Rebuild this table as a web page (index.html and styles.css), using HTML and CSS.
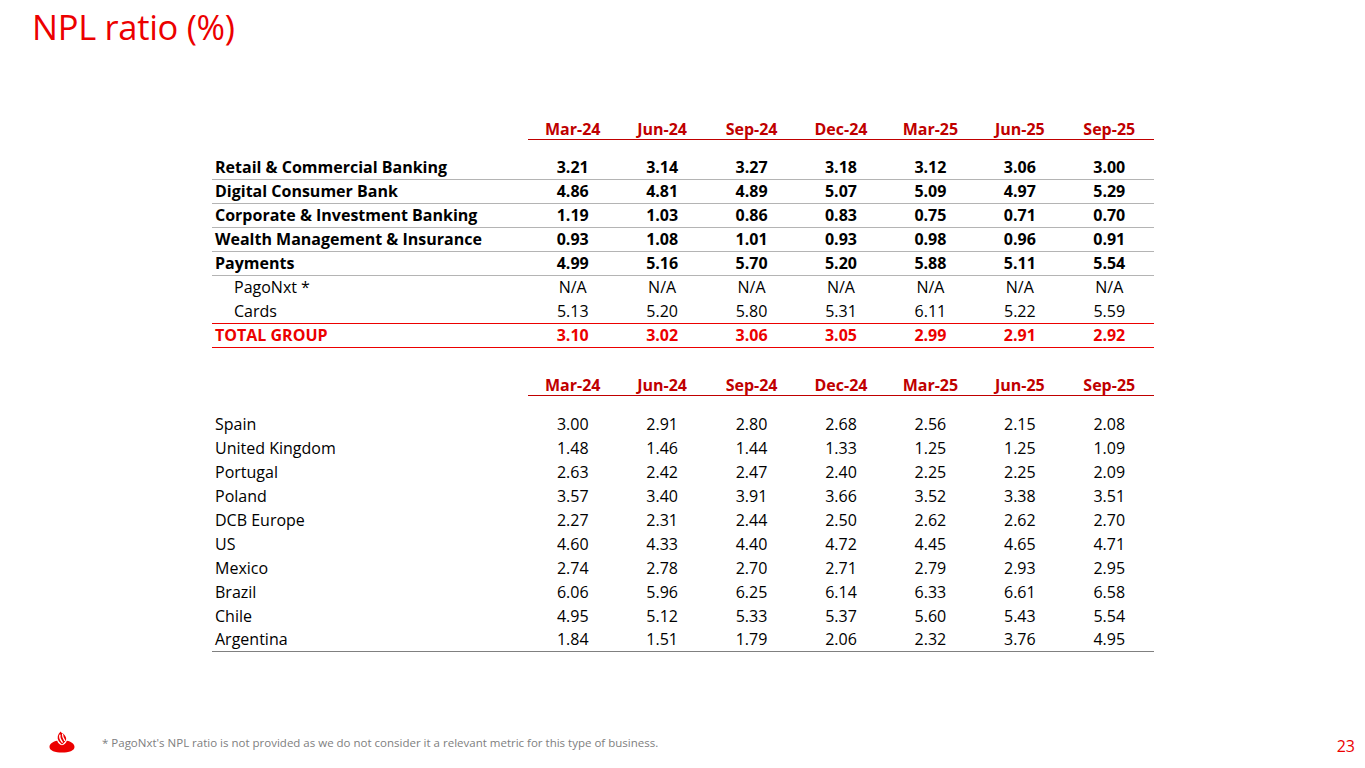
FILE: index.html
```html
<!DOCTYPE html>
<html>
<head>
<meta charset="utf-8">
<link rel="stylesheet" href="styles.css">
</head>
<body>
<div class="slide">
  <h1 class="title">NPL ratio (%)</h1>
  <div class="tables">
    <table class="npl">
      <colgroup><col class="c-label"><col><col><col><col><col><col><col></colgroup>
      <thead>
        <tr class="head"><th></th><th>Mar-24</th><th>Jun-24</th><th>Sep-24</th><th>Dec-24</th><th>Mar-25</th><th>Jun-25</th><th>Sep-25</th></tr>
      </thead>
      <tbody>
        <tr class="spacer"><td colspan="8"></td></tr>
        <tr class="b sep"><td>Retail &amp; Commercial Banking</td><td>3.21</td><td>3.14</td><td>3.27</td><td>3.18</td><td>3.12</td><td>3.06</td><td>3.00</td></tr>
        <tr class="b sep"><td>Digital Consumer Bank</td><td>4.86</td><td>4.81</td><td>4.89</td><td>5.07</td><td>5.09</td><td>4.97</td><td>5.29</td></tr>
        <tr class="b sep"><td>Corporate &amp; Investment Banking</td><td>1.19</td><td>1.03</td><td>0.86</td><td>0.83</td><td>0.75</td><td>0.71</td><td>0.70</td></tr>
        <tr class="b sep"><td>Wealth Management &amp; Insurance</td><td>0.93</td><td>1.08</td><td>1.01</td><td>0.93</td><td>0.98</td><td>0.96</td><td>0.91</td></tr>
        <tr class="b sep"><td>Payments</td><td>4.99</td><td>5.16</td><td>5.70</td><td>5.20</td><td>5.88</td><td>5.11</td><td>5.54</td></tr>
        <tr class="sub"><td>PagoNxt *</td><td>N/A</td><td>N/A</td><td>N/A</td><td>N/A</td><td>N/A</td><td>N/A</td><td>N/A</td></tr>
        <tr class="sub"><td>Cards</td><td>5.13</td><td>5.20</td><td>5.80</td><td>5.31</td><td>6.11</td><td>5.22</td><td>5.59</td></tr>
        <tr class="total"><td>TOTAL GROUP</td><td>3.10</td><td>3.02</td><td>3.06</td><td>3.05</td><td>2.99</td><td>2.91</td><td>2.92</td></tr>
      </tbody>
    </table>

    <table class="npl second">
      <colgroup><col class="c-label"><col><col><col><col><col><col><col></colgroup>
      <thead>
        <tr class="head"><th></th><th>Mar-24</th><th>Jun-24</th><th>Sep-24</th><th>Dec-24</th><th>Mar-25</th><th>Jun-25</th><th>Sep-25</th></tr>
      </thead>
      <tbody>
        <tr class="spacer"><td colspan="8"></td></tr>
        <tr><td>Spain</td><td>3.00</td><td>2.91</td><td>2.80</td><td>2.68</td><td>2.56</td><td>2.15</td><td>2.08</td></tr>
        <tr><td>United Kingdom</td><td>1.48</td><td>1.46</td><td>1.44</td><td>1.33</td><td>1.25</td><td>1.25</td><td>1.09</td></tr>
        <tr><td>Portugal</td><td>2.63</td><td>2.42</td><td>2.47</td><td>2.40</td><td>2.25</td><td>2.25</td><td>2.09</td></tr>
        <tr><td>Poland</td><td>3.57</td><td>3.40</td><td>3.91</td><td>3.66</td><td>3.52</td><td>3.38</td><td>3.51</td></tr>
        <tr><td>DCB Europe</td><td>2.27</td><td>2.31</td><td>2.44</td><td>2.50</td><td>2.62</td><td>2.62</td><td>2.70</td></tr>
        <tr><td>US</td><td>4.60</td><td>4.33</td><td>4.40</td><td>4.72</td><td>4.45</td><td>4.65</td><td>4.71</td></tr>
        <tr><td>Mexico</td><td>2.74</td><td>2.78</td><td>2.70</td><td>2.71</td><td>2.79</td><td>2.93</td><td>2.95</td></tr>
        <tr><td>Brazil</td><td>6.06</td><td>5.96</td><td>6.25</td><td>6.14</td><td>6.33</td><td>6.61</td><td>6.58</td></tr>
        <tr><td>Chile</td><td>4.95</td><td>5.12</td><td>5.33</td><td>5.37</td><td>5.60</td><td>5.43</td><td>5.54</td></tr>
        <tr class="last"><td>Argentina</td><td>1.84</td><td>1.51</td><td>1.79</td><td>2.06</td><td>2.32</td><td>3.76</td><td>4.95</td></tr>
      </tbody>
    </table>
  </div>

  <footer class="footer">
    <svg class="logo" viewBox="0 0 26 22" width="26" height="22" aria-hidden="true">
      <path d="M0.5 16 C0.5 12.6 4 10.6 8.2 9.8 C9 12.2 10.8 14.2 13 14.2 C15.2 14.2 17 12.2 17.8 9.8 C22 10.6 25.5 12.6 25.5 16 C25.5 19.6 20 21.6 13 21.6 C6 21.6 0.5 19.6 0.5 16Z" fill="#ec0000"/>
      <path d="M11.6 0.4 C8.6 3.4 7.9 6.6 9.4 9.6 C10.4 11.6 11.9 12.5 13 13.6 C14.5 12.2 16.5 10.6 17.1 8.6 C17.6 6.6 16.2 4.6 14.6 3 C13.6 2 12 1.6 11.6 0.4Z" fill="#ec0000"/>
      <path d="M10.9 4.2 C10.3 6.6 11.4 8.8 13.2 11.2" stroke="#fff" stroke-width="1.4" fill="none" stroke-linecap="round"/>
      <path d="M13.6 3.4 C13.3 5.6 14.3 7.4 15.6 9.4" stroke="#fff" stroke-width="1.3" fill="none" stroke-linecap="round"/>
    </svg>
    <p class="note">* PagoNxt's NPL ratio is not provided as we do not consider it a relevant metric for this type of business.</p>
    <span class="page">23</span>
  </footer>
</div>
</body>
</html>
```

FILE: styles.css
```css
* { box-sizing: border-box; }
html, body { margin: 0; padding: 0; background: #fff; }
body {
  font-family: "Open Sans", "Noto Sans", sans-serif;
  color: #000;
}
.slide {
  width: 1365px;
  height: 768px;
  position: relative;
  display: flex;
  flex-direction: column;
}
.title {
  margin: 0;
  padding: 4px 0 0 32px;
  font-weight: 400;
  font-size: 34.5px;
  line-height: 46px;
  color: #ec0000;
  letter-spacing: -0.3px;
}
.tables {
  padding: 65px 0 0 212px;
  display: flex;
  flex-direction: column;
}
.npl {
  width: 942px;
  border-collapse: collapse;
  table-layout: fixed;
  font-size: 16px;
}
.npl col.c-label { width: 316px; }
.npl th {
  color: #c00000;
  font-weight: 700;
  font-size: 16px;
  height: 24px;
  line-height: 20px;
  padding: 0;
  text-align: center;
  vertical-align: bottom;
  border-bottom: 1.5px solid #c00000;
}
.npl th:first-child { border-bottom: none; }
.npl td {
  height: 24px;
  padding: 0;
  line-height: 22px;
  text-align: center;
  vertical-align: middle;
  white-space: nowrap;
}
.npl td:first-child { text-align: left; padding-left: 3px; }
.npl tr.spacer td { height: 16px; }
.npl tr.b td { font-weight: 700; }
.npl tr.sep td { border-bottom: 1px solid #b4b4b4; }
.npl tr.sub td:first-child { padding-left: 22px; }
.npl tr.total td {
  color: #ec0000;
  font-weight: 700;
  border-top: 1.5px solid #ec0000;
  border-bottom: 1.5px solid #ec0000;
}
.npl tr.last td { border-bottom: 1px solid #808080; }
.second { margin-top: 24px; }
.footer {
  position: absolute;
  left: 0;
  right: 0;
  bottom: 0;
  height: 52px;
  display: flex;
  align-items: center;
}
.logo { margin: 0 0 0 49px; }
.note {
  margin: 0 0 0 27px;
  font-size: 11.5px;
  color: #808080;
}
.page {
  margin-left: auto;
  margin-right: 10px;
  font-size: 16px;
  color: #ec0000;
  padding-top: 8px;
}
```
